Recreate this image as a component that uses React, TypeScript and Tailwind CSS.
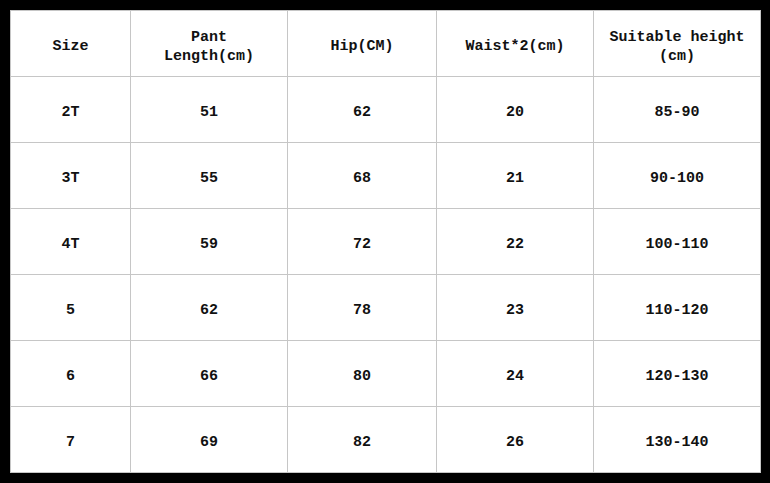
import React from "react";

const header: React.ReactNode[] = [
  "Size",
  <>Pant<br />Length(cm)</>,
  "Hip(CM)",
  "Waist*2(cm)",
  <>Suitable height<br />(cm)</>,
];

const rows = [
  ["2T", "51", "62", "20", "85-90"],
  ["3T", "55", "68", "21", "90-100"],
  ["4T", "59", "72", "22", "100-110"],
  ["5", "62", "78", "23", "110-120"],
  ["6", "66", "80", "24", "120-130"],
  ["7", "69", "82", "26", "130-140"],
];

export default function App() {
  return (
    <div className="w-[770px] h-[483px] bg-black pt-[10px] pl-[10px] overflow-hidden">
      <div
        className="grid w-[751px] h-[463px] bg-[#c6c6c6] gap-px p-px grid-cols-[119px_156px_148px_156px_166px] grid-rows-[65px_65px_65px_65px_65px_65px_65px] text-[15px] leading-[19px] font-bold text-[#111]"
        style={{ fontFamily: '"Liberation Mono", "Noto Sans CJK SC", monospace' }}
      >
        {header.map((h, i) => (
          <div key={"h" + i} className="bg-white flex items-center justify-center text-center pt-[6px]">
            <span>{h}</span>
          </div>
        ))}
        {rows.map((r, ri) =>
          r.map((c, ci) => (
            <div key={ri + "-" + ci} className="bg-white flex items-center justify-center text-center pt-[6px]">
              {c}
            </div>
          ))
        )}
      </div>
    </div>
  );
}
